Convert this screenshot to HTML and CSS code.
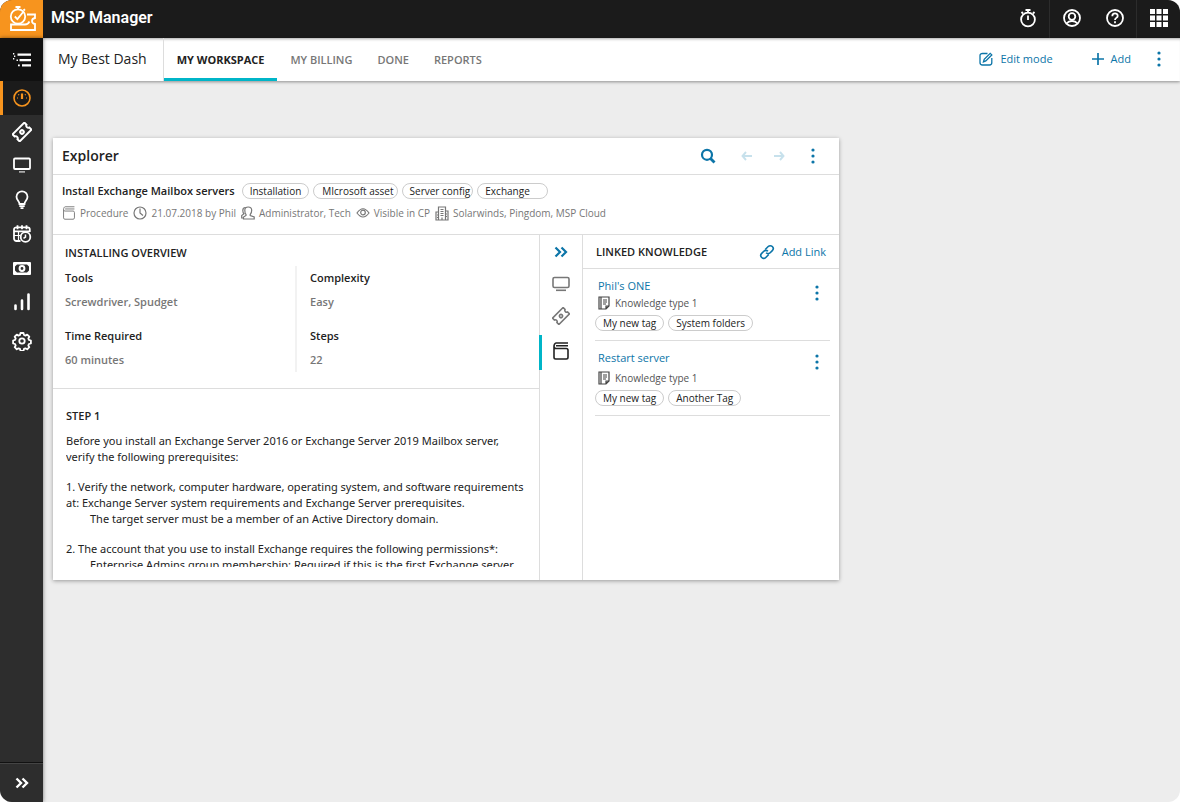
FILE: index.html
```html
<!DOCTYPE html>
<html lang="en">
<head>
<meta charset="utf-8">
<meta name="viewport" content="width=device-width, initial-scale=1">
<title>MSP Manager</title>
<link rel="stylesheet" href="styles.css">
</head>
<body>
<svg class="sprite" aria-hidden="true">
  <symbol id="ticket" viewBox="0 0 18 18"><g transform="rotate(-45 9 9)"><path d="M1.5 4.5h15v2.7a1.9 1.9 0 0 0 0 3.6v2.7h-15v-2.7a1.9 1.9 0 0 0 0-3.6z"/><circle cx="9" cy="9" r="1.6"/></g></symbol>
  <symbol id="book" viewBox="0 0 18 20"><path d="M2 5.5v10.8c0 1 .7 1.7 1.7 1.7h10.6c1 0 1.7-.7 1.7-1.7V9.2c0-1-.7-1.7-1.7-1.7H4C2.900 7.500 2 6.600 2 5.300S2.900 2 4 2h12M4 4.800h12"/></symbol>
  <symbol id="chevrons" viewBox="0 0 14 12"><path d="M1.500 1.500L6 6l-4.500 4.500M7.500 1.500L12 6l-4.500 4.500"/></symbol>
  <symbol id="dots" viewBox="0 0 4 16"><circle cx="2" cy="2" r="1.600"/><circle cx="2" cy="8" r="1.600"/><circle cx="2" cy="14" r="1.600"/></symbol>
  <symbol id="note" viewBox="0 0 12 14"><path d="M3 1h8v9l-3 3H3zM11 10H8v3M3 1H1v12h2M5 4h4M5 6h4M5 8h3"/></symbol>
</svg>

<div class="app">
  <header class="topbar">
    <a class="logo" href="#" aria-label="Home">
      <svg width="28" height="28" viewBox="0 0 28 28" fill="none" stroke="currentColor" stroke-width="1.800"><circle cx="10" cy="11.500" r="7.200"/><path d="M7.500 2h5M10 2v2.500M6.800 11.500l2.600 2.600 6.200-7.600M15.500 5.500l1.500-1.300"/><path d="M19 9.500h8v3.500q-3 .5-3 3t3 3v6H3v-5.500h14q3 0 4.500-3"/></svg>
    </a>
    <h1 class="product">MSP Manager</h1>
    <div class="top-actions">
      <button class="top-btn divided" aria-label="Timer"><svg width="18" height="20" viewBox="0 0 18 20" fill="none" stroke="currentColor" stroke-width="1.800"><circle cx="9" cy="11.500" r="6.900"/><path d="M9 7.500v4.500M6.500 2h5M9 2v2.500M14 5.500l1.500-1.500M4 5.500L2.500 4"/></svg></button>
      <button class="top-btn" aria-label="Account"><svg width="20" height="20" viewBox="0 0 20 20" fill="none" stroke="currentColor" stroke-width="1.800"><circle cx="10" cy="10" r="8"/><circle cx="10" cy="8.500" r="3.300"/><path d="M4.500 15.500q2-2.500 5.500-2.500t5.500 2.500"/></svg></button>
      <button class="top-btn divided" aria-label="Help"><svg width="20" height="20" viewBox="0 0 20 20" fill="none" stroke="currentColor" stroke-width="1.800"><circle cx="10" cy="10" r="8"/><path d="M7.300 8.200c0-3.600 5.400-3.600 5.400-.3 0 2-2.700 2-2.700 4M10 13.300v1.900"/></svg></button>
      <button class="top-btn" aria-label="Apps"><svg width="18" height="18" viewBox="0 0 18 18" fill="currentColor"><path d="M0 0h5v5H0zM6.500 0h5v5h-5zM13 0h5v5h-5zM0 6.500h5v5H0zM6.500 6.500h5v5h-5zM13 6.500h5v5h-5zM0 13h5v5H0zM6.500 13h5v5h-5zM13 13h5v5h-5z"/></svg></button>
    </div>
  </header>

  <div class="shell">
    <nav class="sidebar" aria-label="Main">
      <a class="side-link side-menu" href="#" aria-label="Menu"><svg width="18" height="16" viewBox="0 0 18 16" fill="currentColor"><path d="M4.500 1.500H18v2.200H4.500zM6.500 7H18v2.200H6.500zM9 12.300h9v2.200H9zM0 1h1.300v1.500H0zM1 3.500h1.300V5H1zM0 6h1.300v1.500H0zM3.500 7.500h1.500v1.500H3.500zM5 12.500h1.800v1.800H5z"/></svg></a>
      <a class="side-link is-active" href="#" aria-label="Dashboard"><svg width="18" height="18" viewBox="0 0 18 18" fill="none" stroke="currentColor" stroke-width="1.600"><circle cx="9" cy="9" r="8"/><path d="M9 4.500v5.500" stroke-width="2.200"/><path d="M4 9h1M13 9h1M5.300 5.300l.8.8M12.700 5.300l-.8.8" stroke-width="1.200"/></svg></a>
      <a class="side-link" href="#" aria-label="Tickets"><svg class="line" width="20" height="20"><use href="#ticket"/></svg></a>
      <a class="side-link" href="#" aria-label="Devices"><svg class="line" width="20" height="20" viewBox="0 0 20 20"><rect x="2" y="2.500" width="16" height="10.500" rx="1"/><path d="M7 15.800h6" opacity=".6"/></svg></a>
      <a class="side-link" href="#" aria-label="Knowledge"><svg class="line" width="18" height="20" viewBox="0 0 18 20"><path d="M6.500 14c0-3-3-3.500-3-7.200a5.500 5.500 0 0 1 11 0c0 3.700-3 4.200-3 7.200zM6.300 16.200h5.400M7.500 18.200h3"/></svg></a>
      <a class="side-link" href="#" aria-label="Schedule"><svg class="line" width="20" height="20" viewBox="0 0 20 20"><path d="M8.500 17H4.500C3 17 2 16 2 14.500v-9C2 4 3 3.300 4.500 3.300h11c1.500 0 2.300.7 2.300 2.200v2.500M2 7.300h16M5.500 1.300v4M10 1.300v4M14.500 1.300v4"/><path d="M2 11.500h6M6.500 7.500V17" stroke-width="1.200"/><circle cx="13.500" cy="13" r="4.800"/><path d="M13.500 10.500V13l-2 1.300" stroke-width="1.500"/></svg></a>
      <a class="side-link" href="#" aria-label="Billing"><svg width="18" height="13" viewBox="0 0 18 13"><path fill="currentColor" fill-rule="evenodd" d="M1 0h16a1 1 0 0 1 1 1v11a1 1 0 0 1-1 1H1a1 1 0 0 1-1-1V1a1 1 0 0 1 1-1zM4 2.500L2 4.500v4l2 2h10l2-2v-4l-2-2z"/><circle cx="9" cy="6.500" r="2.400" fill="none" stroke="currentColor" stroke-width="2"/></svg></a>
      <a class="side-link" href="#" aria-label="Reports"><svg width="18" height="18" viewBox="0 0 18 18" fill="none" stroke="currentColor" stroke-width="2.600" stroke-linecap="round"><path d="M2.500 12.500V16M9 7.500V16M15.500 1.500V16"/></svg></a>
      <a class="side-link side-settings" href="#" aria-label="Settings"><svg class="line" width="20" height="20" viewBox="0 0 20 20"><circle cx="10" cy="10" r="2.700"/><path stroke-linejoin="round" d="M8.500 2h3l.5 2 1.400.6 1.800-1 2.100 2.100-1 1.800.6 1.400 2 .6v3l-2 .5-.6 1.500 1 1.700-2.100 2.100-1.800-1-1.400.6-.5 2h-3l-.5-2-1.500-.6-1.700 1-2.100-2.100 1-1.700-.6-1.500-2-.5v-3l2-.6.6-1.400-1-1.800 2.100-2.100 1.700 1L8 4z"/></svg></a>
      <button class="side-link side-expand" aria-label="Expand menu"><svg class="line heavy" width="14" height="12"><use href="#chevrons"/></svg></button>
    </nav>

    <main class="main">
      <div class="dashbar">
        <h2 class="dash-name">My Best Dash</h2>
        <nav class="tabs" aria-label="Dashboards">
          <a class="tab is-active" href="#">MY WORKSPACE</a>
          <a class="tab" href="#">MY BILLING</a>
          <a class="tab" href="#">DONE</a>
          <a class="tab" href="#">REPORTS</a>
        </nav>
        <div class="dash-actions">
          <button class="text-btn"><svg width="14" height="14" viewBox="0 0 14 14" fill="none" stroke="currentColor" stroke-width="1.300"><path d="M8.500 1.500h-5C2 1.500 1 2.300 1 3.500v7C1 12 2 13 3.500 13h7c1.500 0 2.300-1 2.300-2.500V6M4.500 9.800l.7-2.500 6-6 1.600 1.600-6 6z"/></svg>Edit mode</button>
          <button class="text-btn"><svg width="12" height="12" viewBox="0 0 12 12" fill="none" stroke="currentColor" stroke-width="1.700"><path d="M6 0v12M0 6h12"/></svg>Add</button>
          <button class="icon-btn" aria-label="Dashboard options"><svg class="dots" width="4" height="16"><use href="#dots"/></svg></button>
        </div>
      </div>

      <div class="canvas">
        <section class="card">
          <header class="card-head">
            <h3 class="card-title">Explorer</h3>
            <div class="card-tools">
              <button class="icon-btn" aria-label="Search"><svg width="16" height="16" viewBox="0 0 16 16" fill="none" stroke="currentColor" stroke-width="2.200"><circle cx="7" cy="6.800" r="5"/><path d="M10.500 10.500l4 4" stroke-width="2.800"/></svg></button>
              <div class="history">
                <button class="icon-btn" aria-label="Back" disabled><svg width="12" height="10" viewBox="0 0 12 10" fill="none" stroke="currentColor" stroke-width="1.900"><path d="M5 1L1.500 5 5 9M1.500 5H11"/></svg></button>
                <button class="icon-btn" aria-label="Forward" disabled><svg width="12" height="10" viewBox="0 0 12 10" fill="none" stroke="currentColor" stroke-width="1.900"><path d="M7 1l3.500 4L7 9M10.500 5H1"/></svg></button>
              </div>
              <button class="icon-btn" aria-label="Widget options"><svg class="dots" width="4" height="16"><use href="#dots"/></svg></button>
            </div>
          </header>

          <div class="summary">
            <div class="summary-top">
              <h4 class="article-title">Install Exchange Mailbox servers</h4>
              <ul class="tags">
                <li class="tag">Installation</li>
                <li class="tag tag-indent">MIcrosoft asset</li>
                <li class="tag tag-snug">Server config</li>
                <li class="tag tag-loose">Exchange</li>
              </ul>
            </div>
            <ul class="meta">
              <li><svg class="thin" width="14" height="16"><use href="#book"/></svg>Procedure</li>
              <li><svg class="thin" width="14" height="14" viewBox="0 0 14 14"><circle cx="7" cy="7" r="6"/><path d="M7 2.500V7l3 2.500"/></svg>21.07.2018 by Phil</li>
              <li><svg class="thin" width="14" height="14" viewBox="0 0 14 14"><path d="M5 8.500C4 7.500 3.800 6 3.800 4.300 3.800 2.300 5 1 7.200 1s3.500 1.300 3.500 3.300c0 1.700-.5 3.200-1.500 4.200v1l4 1.500v2H2.500v-2L5 9.500zM4.500 1.500C2.500 1.500 1.800 3 1.800 4.500s.4 2.500 1.200 3.300L.7 9.500V12h1.800"/></svg>Administrator, Tech</li>
              <li><svg class="thin" width="14" height="12" viewBox="0 0 14 12"><path d="M1 6q6-8.500 12 0-6 8-12 0z"/><circle cx="7" cy="5.500" r="2.300"/></svg>Visible in CP</li>
              <li><svg class="thin" width="14" height="15" viewBox="0 0 14 15"><path d="M3.500 14V1h7v13M3.500 6H1v8h12V5h-2.500M7 14v-2.500M5.500 3.500h3M5.500 5.500h3M5.500 7.500h3M5.500 9.500h3M2 9h1M2 11.500h1M11 8h1M11 10.500h1"/></svg>Solarwinds, Pingdom, MSP Cloud</li>
            </ul>
          </div>

          <div class="columns">
            <div class="article">
              <section class="overview">
                <h4 class="section-title">INSTALLING OVERVIEW</h4>
                <div class="facts">
                  <dl class="fact-col">
                    <div><dt>Tools</dt><dd>Screwdriver, Spudget</dd></div>
                    <div><dt>Time Required</dt><dd>60 minutes</dd></div>
                  </dl>
                  <dl class="fact-col">
                    <div><dt>Complexity</dt><dd>Easy</dd></div>
                    <div><dt>Steps</dt><dd>22</dd></div>
                  </dl>
                </div>
              </section>
              <section class="step">
                <h4 class="section-title">STEP 1</h4>
                <div class="step-text">
                  <p>Before you install an Exchange Server 2016 or Exchange Server 2019 Mailbox server,<br>verify the following prerequisites:</p>
                  <p>1. Verify the network, computer hardware, operating system, and software requirements<br>at: Exchange Server system requirements and Exchange Server prerequisites.<span class="sub">The target server must be a member of an Active Directory domain.</span></p>
                  <p>2. The account that you use to install Exchange requires the following permissions*:<span class="sub">Enterprise Admins group membership: Required if this is the first Exchange server</span></p>
                </div>
              </section>
            </div>

            <nav class="rail" aria-label="Related">
              <button class="rail-btn rail-toggle" aria-label="Collapse panel"><svg class="line heavy" width="14" height="12"><use href="#chevrons"/></svg></button>
              <button class="rail-btn" aria-label="Devices"><svg class="line" width="18" height="16" viewBox="0 0 18 16"><rect x="1" y="1.500" width="16" height="10" rx="1.500"/><path d="M4 14.300h10"/></svg></button>
              <button class="rail-btn" aria-label="Tickets"><svg class="line" width="18" height="18"><use href="#ticket"/></svg></button>
              <button class="rail-btn is-active" aria-label="Knowledge"><svg class="line" width="18" height="20"><use href="#book"/></svg></button>
            </nav>

            <section class="linked">
              <header class="linked-head">
                <h4 class="section-title">LINKED KNOWLEDGE</h4>
                <button class="text-btn link-btn"><svg width="16" height="16" viewBox="0 0 16 16" fill="none" stroke="currentColor" stroke-width="1.600"><g transform="rotate(-45 8 8)"><path d="M7.500 11H3.300a2.900 2.900 0 0 1 0-5.800h3a2.900 2.900 0 0 1 2.900 2.900M8.500 5h4.200a2.900 2.900 0 0 1 0 5.800h-3A2.900 2.900 0 0 1 6.800 7.900"/></g></svg>Add Link</button>
              </header>
              <ul class="linked-list">
                <li class="linked-item">
                  <div class="linked-body">
                    <a class="linked-name" href="#">Phil's ONE</a>
                    <p class="kind"><svg class="thin dark" width="12" height="14"><use href="#note"/></svg>Knowledge type 1</p>
                    <ul class="tags"><li class="tag">My new tag</li><li class="tag">System folders</li></ul>
                  </div>
                  <button class="icon-btn" aria-label="Options for Phil's ONE"><svg class="dots" width="4" height="16"><use href="#dots"/></svg></button>
                </li>
                <li class="linked-item spaced">
                  <div class="linked-body">
                    <a class="linked-name" href="#">Restart server</a>
                    <p class="kind"><svg class="thin dark" width="12" height="14"><use href="#note"/></svg>Knowledge type 1</p>
                    <ul class="tags"><li class="tag">My new tag</li><li class="tag">Another Tag</li></ul>
                  </div>
                  <button class="icon-btn" aria-label="Options for Restart server"><svg class="dots" width="4" height="16"><use href="#dots"/></svg></button>
                </li>
              </ul>
            </section>
          </div>
        </section>
      </div>
    </main>
  </div>
</div>
</body>
</html>
```
FILE: styles.css
```css
* { box-sizing: border-box; }
body, h1, h2, h3, h4, p, ul, dl, dd { margin: 0; padding: 0; }
ul { list-style: none; }
a { color: inherit; text-decoration: none; }
button { margin: 0; padding: 0; border: 0; background: none; color: inherit; font: inherit; cursor: pointer; }
svg { display: block; flex: none; }

body {
  background: #fff;
  color: #222;
  font-family: "Open Sans", "Noto Sans", sans-serif;
  font-size: 11px;
  line-height: 16px;
}

.sprite { position: absolute; width: 0; height: 0; }
.line { fill: none; stroke: currentColor; stroke-width: 1.8; }
.line.heavy { stroke-width: 2.4; }
.thin { fill: none; stroke: #777; stroke-width: 1.2; }
.thin.dark { stroke: #444; }
.dots { fill: currentColor; }

.app {
  display: flex;
  flex-direction: column;
  min-height: 100vh;
  margin-right: 2px;
  border-radius: 12px;
  overflow: hidden;
  background: #ededed;
}

/* Top bar */
.topbar { display: flex; height: 38px; background: #1b1b1b; color: #fff; }
.logo { display: flex; align-items: center; justify-content: center; width: 43px; background: #f7941e; }
.product { padding-left: 8px; font: 600 16px/36px Roboto, sans-serif; }
.top-actions { display: flex; margin-left: auto; }
.top-btn { display: flex; align-items: center; justify-content: center; width: 43px; padding-bottom: 2px; }
.top-btn.divided { width: 44px; border-right: 1px solid #2c2c2c; }

/* Sidebar */
.shell { display: flex; flex: 1; }
.sidebar {
  display: flex;
  flex-direction: column;
  flex: none;
  width: 43px;
  background: #2d2d2d;
  color: #fff;
  box-shadow: 0 0 4px rgba(0, 0, 0, .5);
  z-index: 1;
}
.side-link { display: flex; align-items: center; justify-content: center; width: 100%; height: 34px; }
.side-menu { height: 43px; background: #111; }
.side-link.is-active { background: #1b1b1b; color: #f7941e; border-left: 3px solid #f7941e; padding-right: 3px; }
.side-settings { height: 44px; }
.side-expand { height: 40px; margin-top: auto; border-top: 1px solid #111; box-shadow: inset 0 1px #444; }

/* Dashboard bar */
.main { display: flex; flex-direction: column; flex: 1; min-width: 0; }
.dashbar {
  display: flex;
  height: 43px;
  background: #fff;
  box-shadow: 0 1px 3px rgba(0, 0, 0, .4), inset 0 3px 3px -2px rgba(0, 0, 0, .35);
}
.dash-name { padding: 0 16px 0 15px; border-right: 1px solid #ddd; font-size: 14px; line-height: 42px; font-weight: 400; }
.tabs { display: flex; gap: 1px; }
.tab { padding: 2px 12px 0; border-bottom: 3px solid transparent; color: #777; font-weight: 600; line-height: 40px; }
.tab.is-active { padding: 2px 13px 0; border-color: #00b5c8; color: #222; font-weight: 700; }
.dash-actions { display: flex; align-items: center; margin-left: auto; gap: 39px; padding: 0 10px 2px 0; color: #0c75a8; }
.text-btn { display: flex; align-items: center; gap: 7px; color: #0c75a8; }
.icon-btn { display: flex; align-items: center; justify-content: center; color: #0c75a8; }
.icon-btn:disabled { color: #c7e1ec; }
.dash-actions .icon-btn { width: 22px; height: 24px; margin-left: -22px; }

/* Card */
.canvas { display: grid; grid-template-columns: 786fr 331fr; align-items: start; padding: 57px 10px 20px; }
.card { background: #fff; box-shadow: 0 1px 4px rgba(0, 0, 0, .35); }
.card-head { display: flex; align-items: center; height: 37px; padding: 0 10px 0 9px; border-bottom: 1px solid #ddd; }
.card-title { font-size: 14px; font-weight: 600; }
.card-tools { display: flex; align-items: center; margin-left: auto; gap: 2px; }
.card-tools .icon-btn { width: 32px; height: 28px; }
.history { display: flex; padding-left: 5px; }

.summary { height: 59px; padding: 7px 9px; }
.summary-top { display: flex; align-items: center; gap: 7px; height: 18px; }
.article-title { font-size: 11px; font-weight: 600; color: #222; }
.tags { display: flex; gap: 4px; }
.tag {
  height: 16px;
  padding: 0 7px;
  border: 1px solid #ccc;
  border-radius: 8px;
  font-size: 10px;
  line-height: 14px;
  white-space: nowrap;
}
.tag-indent { padding: 0 3px 0 8px; }
.tag-snug { padding-right: 2px; }
.tag-loose { padding-right: 17px; }
.meta { display: flex; gap: 5px; padding-top: 5px; color: #777; font-size: 10px; }
.meta li { display: flex; align-items: center; gap: 4px; height: 16px; white-space: nowrap; }

.columns { display: grid; grid-template-columns: 1fr 44px 256px; border-top: 1px solid #ddd; }
.section-title { font-size: 11px; font-weight: 600; }

.overview { padding: 10px 0 16px 12px; border-bottom: 1px solid #ddd; }
.facts { display: grid; grid-template-columns: 230fr 244fr; padding-top: 5px; }
.fact-col { display: flex; flex-direction: column; gap: 10px; line-height: 24px; }
.fact-col + .fact-col { padding-left: 13px; border-left: 2px solid #f2f2f2; }
.fact-col dt { font-weight: 600; }
.fact-col dd { color: #777; font-weight: 600; }
.step { padding: 19px 10px 13px 13px; }
.step-text { height: 143px; padding-top: 9px; overflow: hidden; font-family: "Noto Sans", "Open Sans", sans-serif; white-space: nowrap; }
.step-text p + p { margin-top: 14px; }
.sub { display: block; padding-left: 24px; }

.rail { border: solid #ddd; border-width: 0 1px; }
.rail-btn { position: relative; display: flex; align-items: center; justify-content: center; width: 100%; height: 32px; color: #777; }
.rail-btn .line { stroke-width: 1.6; }
.rail-toggle { height: 33px; color: #0c75a8; }
.rail-toggle .line.heavy { stroke-width: 2.2; }
.rail-btn.is-active { height: 38px; color: #222; }
.rail-btn.is-active::before { content: ""; position: absolute; left: -1px; top: 3px; bottom: 0; width: 3px; background: #00b5c8; }

.linked-head { display: flex; align-items: center; justify-content: space-between; height: 34px; padding: 0 13px; border-bottom: 1px solid #ddd; }
.linked-list { padding: 0 9px 0 12px; }
.linked-item { display: flex; justify-content: space-between; border-bottom: 1px solid #ddd; padding: 8px 0 9px; }
.linked-item .icon-btn { width: 26px; height: 32px; }
.linked-item.spaced .icon-btn { height: 26px; }
.linked-body { display: flex; flex-direction: column; }
.linked-name { padding-left: 3px; color: #0c75a8; line-height: 18px; }
.kind { display: flex; align-items: center; gap: 5px; padding-left: 3px; color: #555; font-size: 10px; }
.linked-body .tags { padding-top: 4px; }
.spaced .linked-name { padding-bottom: 3px; }
```
